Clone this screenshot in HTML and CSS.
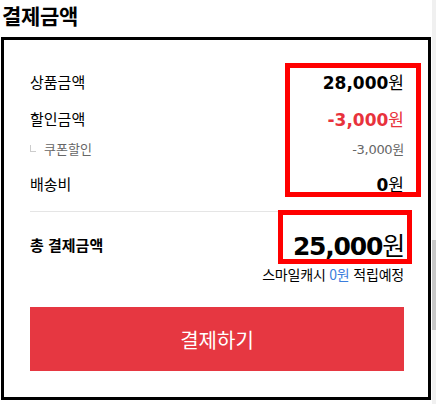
FILE: index.html
```html
<!DOCTYPE html>
<html lang="ko">
<head>
  <meta charset="UTF-8">
  <meta name="viewport" content="width=device-width, initial-scale=1.0">
  <title>결제금액</title>
  <link rel="stylesheet" href="styles.css">
</head>
<body>
  <div class="page">
    <div class="main">
      <h2 class="title">결제금액</h2>

      <div class="summary">
        <ul class="rows">
          <li class="row first">
            <span class="label">상품금액</span>
            <span class="value"><b>28,000</b>원</span>
          </li>
          <li class="row">
            <span class="label">할인금액</span>
            <span class="value discount"><b>-3,000</b>원</span>
          </li>
          <li class="row sub">
            <span class="label"><i class="corner"></i>쿠폰할인</span>
            <span class="value">-3,000원</span>
          </li>
          <li class="row">
            <span class="label">배송비</span>
            <span class="value"><b>0</b>원</span>
          </li>
        </ul>

        <div class="total">
          <span class="total-label">총 결제금액</span>
          <span class="total-value"><b>25,000</b>원</span>
        </div>
        <p class="cash">스마일캐시 <span class="blue">0원</span> 적립예정</p>

        <button type="button" class="pay">결제하기</button>

        <div class="mark mark-rows"></div>
        <div class="mark mark-total"></div>
      </div>
    </div>
    <div class="scroll"><div class="thumb"></div></div>
  </div>
</body>
</html>
```

FILE: styles.css
```css
body {
  margin: 0;
  padding: 0;
  background-color: #fff;
  color: #000;
  font-family: "DejaVu Sans", "Noto Sans CJK KR", sans-serif;
}

.page {
  display: flex;
  width: 436px;
  height: 404px;
  overflow: hidden;
}

.main {
  flex: 1;
}

.scroll {
  width: 4px;
  background-color: #f0f0f0;
}
.thumb {
  height: 90px;
  margin-top: 240px;
  background-color: #c8c8c8;
}

.title {
  margin: 0 0 7px 2px;
  font-family: "Noto Sans CJK KR", sans-serif;
  font-size: 21px;
  font-weight: bold;
  line-height: 30px;
  letter-spacing: -0.3px;
}

.summary {
  position: relative;
  margin: 0 1px;
  padding: 0 24px 26px 26px;
  border: 3px solid #000;
}

.rows {
  list-style: none;
  margin: 0;
  padding: 29px 0 16px;
  border-bottom: 1px solid #e5e5e5;
}

.row {
  display: flex;
  align-items: center;
  justify-content: space-between;
  height: 24px;
  margin-bottom: 16px;
}
.row.first {
  margin-bottom: 13px;
}
.row:last-child {
  margin-bottom: 0;
}
.row.sub {
  height: 20px;
  margin-top: -8px;
  margin-bottom: 13px;
  color: #666;
}

.label {
  display: flex;
  align-items: center;
  font-family: "Noto Sans CJK KR", sans-serif;
  font-size: 15px;
}
.sub .label {
  font-size: 13px;
}

.corner {
  width: 5px;
  height: 6px;
  margin: 0 8px 0 0;
  border-left: 1px solid #ccc;
  border-bottom: 1px solid #ccc;
}

.value {
  font-size: 17px;
}
.value b {
  font-weight: bold;
}
.sub .value {
  font-size: 13px;
  letter-spacing: -0.3px;
}
.discount {
  color: #e8323c;
}

.total {
  display: flex;
  align-items: center;
  justify-content: space-between;
  height: 36px;
  margin-top: 14px;
}
.total-label {
  font-family: "Noto Sans CJK KR", sans-serif;
  font-size: 15px;
  font-weight: bold;
}
.total-value {
  font-size: 25px;
  letter-spacing: -1.2px;
}

.cash {
  margin: 3px 0 0;
  text-align: right;
  font-family: "Noto Sans CJK KR", sans-serif;
  font-size: 14px;
  line-height: 18px;
  letter-spacing: -0.2px;
}
.blue {
  color: #3b7ddd;
}

.pay {
  display: block;
  width: 100%;
  height: 64px;
  margin-top: 24px;
  border: none;
  background-color: #e63741;
  color: #fff;
  font-family: "Noto Sans CJK KR", sans-serif;
  font-size: 20px;
  cursor: pointer;
}

.mark {
  position: absolute;
  box-sizing: border-box;
  border: 5px solid #ff0000;
}
.mark-rows {
  left: 281px;
  top: 23px;
  width: 136px;
  height: 134px;
}
.mark-total {
  left: 274px;
  top: 170px;
  width: 134px;
  height: 54px;
}
```
